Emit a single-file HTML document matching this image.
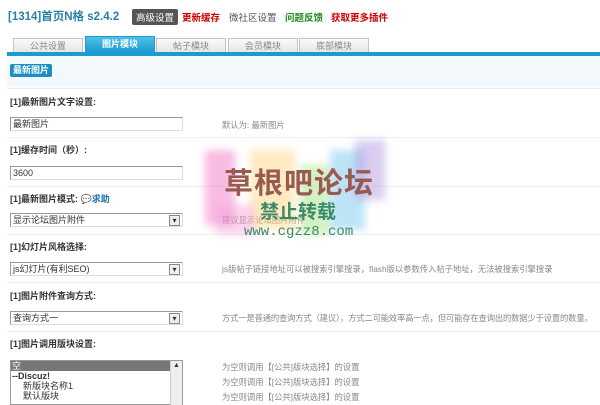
<!DOCTYPE html>
<html><head><meta charset="utf-8"><style>
body{margin:0;width:600px;height:400px;overflow:hidden;background:#fff;position:relative;font-family:"Liberation Sans","Noto Sans CJK SC",sans-serif;font-size:9px;color:#333}
.a{position:absolute;white-space:nowrap}
.tab{position:absolute;top:38px;height:14px;width:70px;background:linear-gradient(#fafafa,#e6e6e6);border:1px solid #c4c4c4;border-bottom:none;text-align:center;line-height:14px;font-size:9px;color:#888;box-sizing:border-box}
.lbl{position:absolute;left:10px;font-size:9px;font-weight:bold;color:#333}
.inp{position:absolute;left:10px;width:173px;height:14px;border:1px solid #999;border-right-color:#ddd;border-bottom-color:#ddd;box-sizing:border-box;line-height:12px;padding-left:2px;font-size:9px;background:#fff}
.sel:after{content:"▾";position:absolute;right:2px;top:1px;width:9px;height:9px;border:1px solid #888;line-height:9px;text-align:center;font-size:8px;background:#eee}
.hint{position:absolute;left:222px;font-size:8.3px;color:#888;white-space:nowrap}
.line{position:absolute;left:7px;right:0;height:1px;background:#eee}
.blob{position:absolute;filter:blur(4px);opacity:.45}
</style></head><body>
<div class="a" style="left:8px;top:8px;font-size:11.5px;font-weight:bold;color:#2a7fa8">[1314]首页N格 s2.4.2</div>
<div class="a" style="left:132px;top:9px;background:#555;color:#fff;font-size:9.5px;padding:1px 4px;border-radius:2px">高级设置</div>
<div class="a" style="left:182px;top:10px;color:#c00;font-weight:bold;font-size:9.5px">更新缓存</div>
<div class="a" style="left:229px;top:10px;color:#555;font-size:9.5px">微社区设置</div>
<div class="a" style="left:285px;top:10px;color:#1a8a1a;font-weight:bold;font-size:9.5px">问题反馈</div>
<div class="a" style="left:331px;top:10px;color:#c00;font-weight:bold;font-size:9.5px">获取更多插件</div>
<div class="tab" style="left:13px">公共设置</div>
<div class="tab" style="left:85px;top:36px;height:16px;background:linear-gradient(#4ec0e8,#1b9bd0);color:#fff;font-weight:bold;border-color:#1b9bd0">图片模块</div>
<div class="tab" style="left:156px">帖子模块</div>
<div class="tab" style="left:228px">会员模块</div>
<div class="tab" style="left:299px">底部模块</div>
<div class="a" style="left:7px;right:0;top:52px;height:4px;background:#1b9bd0"></div>
<div class="a" style="left:7px;right:0;top:56px;height:31px;background:#f3f8fc"></div>
<div class="a" style="left:10px;top:64px;height:13px;padding:0 3px;background:#1b8fc4;color:#fff;font-weight:bold;font-size:9px;line-height:13px;border-radius:2px">最新图片</div>
<div class="line" style="top:88px"></div>

<div class="lbl" style="top:95px">[1]最新图片文字设置:</div>
<div class="inp" style="top:117px">最新图片</div>
<div class="hint" style="top:119px">默认为: 最新图片</div>
<div class="line" style="top:137px"></div>
<div class="lbl" style="top:143px">[1]缓存时间（秒）:</div>
<div class="inp" style="top:166px">3600</div>
<div class="line" style="top:186px"></div>
<div class="lbl" style="top:192px">[1]最新图片模式: <span style="color:#1a6fb0">💬求助</span></div>
<div class="inp sel" style="top:213px">显示论坛图片附件</div>
<div class="hint" style="top:214px">建议显示论坛图片附件</div>
<div class="line" style="top:234px"></div>
<div class="lbl" style="top:240px">[1]幻灯片风格选择:</div>
<div class="inp sel" style="top:262px">js幻灯片(有利SEO)</div>
<div class="hint" style="top:263px">js版帖子链接地址可以被搜索引擎搜录，flash版以参数传入帖子地址，无法被搜索引擎搜录</div>
<div class="line" style="top:282px"></div>
<div class="lbl" style="top:289px">[1]图片附件查询方式:</div>
<div class="inp sel" style="top:311px">查询方式一</div>
<div class="hint" style="top:312px;letter-spacing:-0.15px">方式一是普通的查询方式（建议），方式二可能效率高一点，但可能存在查询出的数据少于设置的数量。</div>
<div class="line" style="top:331px"></div>
<div class="lbl" style="top:337px">[1]图片调用版块设置:</div>
<div class="a" style="left:10px;top:360px;width:173px;height:45px;border:1px solid #999;box-sizing:border-box;background:#fff;font-size:9px;line-height:10px">
<div style="background:#777;color:#fff;width:160px;padding-left:1px">空</div>
<div style="font-weight:bold;padding-left:1px">--Discuz!</div>
<div style="padding-left:12px">新版块名称1</div>
<div style="padding-left:12px">默认版块</div>
<div style="position:absolute;right:0;top:0;width:11px;height:44px;background:#eee;border-left:1px solid #ccc;font-size:7px;text-align:center">▲</div>
</div>
<div class="hint" style="top:361px">为空则调用【[公共]版块选择】的设置</div>
<div class="hint" style="top:376px">为空则调用【[公共]版块选择】的设置</div>
<div class="hint" style="top:391px">为空则调用【[公共]版块选择】的设置</div>

<div class="blob" style="left:205px;top:150px;width:30px;height:75px;background:#f06cc0"></div>
<div class="blob" style="left:250px;top:150px;width:45px;height:80px;background:#ffd27a"></div>
<div class="blob" style="left:300px;top:165px;width:30px;height:70px;background:#a0e07a"></div>
<div class="blob" style="left:330px;top:150px;width:35px;height:80px;background:#6fc3ef"></div>
<div class="blob" style="left:355px;top:140px;width:30px;height:60px;background:#b090e0"></div>
<div class="blob" style="left:215px;top:205px;width:40px;height:30px;background:#f5a0d8"></div>
<div class="a" style="left:224px;top:160px;font-size:29px;font-weight:bold;color:#9a5a50;letter-spacing:1px">草根吧论坛</div>
<div class="a" style="left:260px;top:197px;font-size:19px;font-weight:bold;color:#3a8a6a">禁止转载</div>
<div class="a" style="left:244px;top:224px;font-size:14px;color:#3a8a6a;font-family:'Liberation Mono',monospace">www.cgzz8.com</div>
</body></html>
